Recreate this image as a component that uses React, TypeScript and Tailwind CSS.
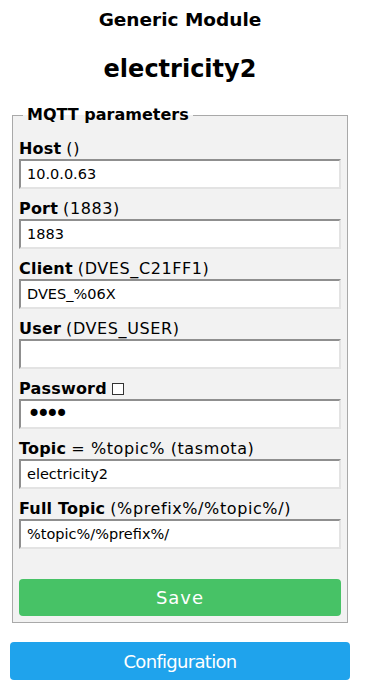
const fields = [
  { name: "Host", hint: "()", value: "10.0.0.63" },
  { name: "Port", hint: "(1883)", value: "1883" },
  { name: "Client", hint: "(DVES_C21FF1)", value: "DVES_%06X" },
  { name: "User", hint: "(DVES_USER)", value: "" },
  { name: "Password", hint: "", value: "1234", password: true },
  { name: "Topic", hint: "= %topic% (tasmota)", value: "electricity2" },
  { name: "Full Topic", hint: "(%prefix%/%topic%/)", value: "%topic%/%prefix%/" },
];

export default function App() {
  return (
    <div className="min-h-[691px] bg-white text-black font-['DejaVu_Sans',Verdana,sans-serif]">
      <div className="ml-[10px] w-[340px]">
        {/* Header */}
        <div className="pt-[9px] text-center">
          <h3 className="text-[18.5px] font-bold leading-[22px]">Generic Module</h3>
          <h2 className="mt-[24px] text-[24px] font-bold leading-[28px]">electricity2</h2>
        </div>

        {/* MQTT form */}
        <fieldset className="mx-[2px] mt-[23px] border border-[#a9a9a9] bg-[#f2f2f2] pl-[6px] pr-[5px] pb-[6px]">
          <legend className="ml-[4px] px-[4px] text-[16px] font-bold leading-[18px]">MQTT parameters</legend>
          <div className="pt-[15px]">
            {fields.map((f) => (
              <div key={f.name} className="mb-[10px]">
                <div className="flex items-center text-[16px] leading-[20px]">
                  <b className="tracking-[0.2px]">{f.name}</b>
                  {f.hint && <span className="ml-[5px] tracking-[0.6px]">{f.hint}</span>}
                  {f.password && (
                    <span className="ml-[5px] inline-block h-[12px] w-[12px] border border-[#333] bg-white" />
                  )}
                </div>
                <input
                  type={f.password ? "password" : "text"}
                  defaultValue={f.value}
                  className={`block h-[30px] w-[322px] border-2 border-t-[#8f8f8f] border-l-[#8f8f8f] border-r-[#e3e3e3] border-b-[#e3e3e3] bg-white px-[6px] text-black outline-none ${
                    f.password ? "text-[24px] tracking-[-5px]" : "text-[14.5px]"
                  }`}
                />
              </div>
            ))}
            <button className="mt-[20px] h-[37px] w-[322px] rounded-[4px] bg-[#47c266] text-[18px] tracking-[1px] text-white">
              Save
            </button>
          </div>
        </fieldset>

        <button className="mt-[19px] h-[38px] w-[340px] rounded-[4px] bg-[#1fa3ec] text-[18px] tracking-[-0.7px] text-white">
          Configuration
        </button>
      </div>
    </div>
  );
}
